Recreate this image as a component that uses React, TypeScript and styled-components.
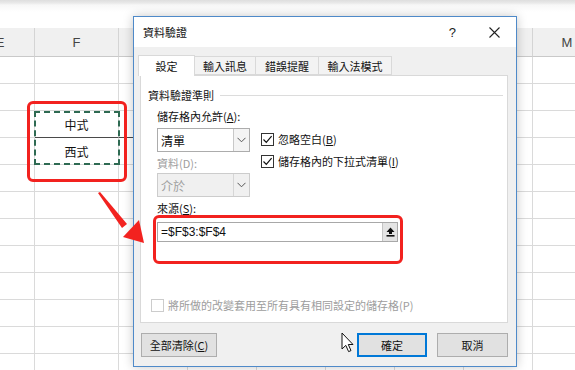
import React from "react";
import styled, { createGlobalStyle } from "styled-components";

const GlobalStyle = createGlobalStyle`
  html, body {
    margin: 0;
    padding: 0;
  }
  body {
    width: 575px;
    height: 370px;
    overflow: hidden;
    background: #fff;
    font-family: "Liberation Sans", "Noto Sans CJK TC", sans-serif;
  }
`;

// column letters; the ones under the dialog are left blank
const COLUMNS = ["E", "F", "", "", "", "", "", "", "M", "N"];
const COL_WIDTHS = "69px 84px repeat(8, 69px)";
const ROW_COUNT = 12;

const CELLS: Record<string, string> = {
  "2-1": "中式",
  "3-1": "西式",
};

const TABS = [
  { label: "設定", width: 57 },
  { label: "輸入訊息", width: 62 },
  { label: "錯誤提醒", width: 64 },
  { label: "輸入法模式", width: 74 },
];

const App: React.FC = () => {
  return (
    <Screen>
      <GlobalStyle />
      <TopStrip />
      <Grid>
        {COLUMNS.map((c, i) => (
          <HeadCell key={i}>{c}</HeadCell>
        ))}
        {Array.from({ length: ROW_COUNT }).map((_, r) =>
          COLUMNS.map((_c, ci) => (
            <Cell key={`${r}-${ci}`} strong={r === 2 && (ci === 1 || ci === 2)}>
              {CELLS[`${r}-${ci}`]}
            </Cell>
          ))
        )}
      </Grid>

      <CopyMarquee />
      <RedBox style={{ left: 27, top: 101, width: 100, height: 81 }} />

      <Dialog>
        <TitleBar>
          <Title>資料驗證</Title>
          <TitleControls>
            <Help>?</Help>
            <svg width="11" height="11" viewBox="0 0 11 11">
              <path d="M0.5 0.5 L10.5 10.5 M10.5 0.5 L0.5 10.5" stroke="#222" strokeWidth="1.1" />
            </svg>
          </TitleControls>
        </TitleBar>

        <DialogBody>
          <Tabs>
            {TABS.map((t, i) => (
              <Tab key={t.label} active={i === 0} width={t.width}>
                {t.label}
              </Tab>
            ))}
          </Tabs>

          <Panel>
            <GroupHeader>
              <span>資料驗證準則</span>
              <GroupLine />
            </GroupHeader>

            <GroupBody>
              <FieldRow>
                <FieldColumn>
                  <Label>
                    儲存格內允許(<u>A</u>):
                  </Label>
                  <Select>
                    <SelectText>清單</SelectText>
                    <SelectButton>
                      <Chevron />
                    </SelectButton>
                  </Select>
                  <Label disabled style={{ marginTop: 4 }}>
                    資料(D):
                  </Label>
                  <Select disabled>
                    <SelectText>介於</SelectText>
                    <SelectButton disabled>
                      <Chevron />
                    </SelectButton>
                  </Select>
                </FieldColumn>

                <CheckColumn>
                  <CheckRow>
                    <CheckBox checked />
                    <span>
                      忽略空白(<u>B</u>)
                    </span>
                  </CheckRow>
                  <CheckRow>
                    <CheckBox checked />
                    <span>
                      儲存格內的下拉式清單(<u>I</u>)
                    </span>
                  </CheckRow>
                </CheckColumn>
              </FieldRow>

              <Label style={{ marginTop: 4 }}>
                來源(<u>S</u>):
              </Label>
              <SourceInput>
                <SourceText>=$F$3:$F$4</SourceText>
                <CollapseButton>
                  <svg width="9" height="10" viewBox="0 0 9 10">
                    <path d="M4.5 0.5 L8.5 5 L6 5 L6 7 L3 7 L3 5 L0.5 5 Z" fill="#111" />
                    <rect x="0.5" y="8" width="8" height="1.6" fill="#111" />
                  </svg>
                </CollapseButton>
              </SourceInput>
            </GroupBody>

            <ApplyRow>
              <CheckBox disabled />
              <span>將所做的改變套用至所有具有相同設定的儲存格(P)</span>
            </ApplyRow>
          </Panel>

          <ButtonRow>
            <Button width={76}>
              全部清除(<u>C</u>)
            </Button>
            <Spacer />
            <Button width={70} primary>
              確定
            </Button>
            <Button width={71}>取消</Button>
          </ButtonRow>
        </DialogBody>
      </Dialog>

      <RedBox style={{ left: 153, top: 215, width: 250, height: 49 }} />

      <Arrow width="60" height="60" viewBox="0 0 60 60">
        <polygon points="7,7 9,6 36,38 31,42" fill="#f2221f" />
        <polygon points="53,57 32,51 48,34" fill="#f2221f" />
      </Arrow>

      <Cursor width="13" height="21" viewBox="0 0 13 21">
        <path
          d="M1 1 L1 17 L4.8 13.4 L7.6 19.6 L10 18.6 L7.3 12.5 L12 12.5 Z"
          fill="#fff"
          stroke="#111"
          strokeWidth="1"
          strokeLinejoin="round"
        />
      </Cursor>
    </Screen>
  );
};

const Chevron: React.FC = () => (
  <svg width="9" height="6" viewBox="0 0 9 6">
    <path d="M0.5 0.8 L4.5 4.8 L8.5 0.8" fill="none" stroke="#555" strokeWidth="1" />
  </svg>
);

const CheckBox: React.FC<{ checked?: boolean; disabled?: boolean }> = ({ checked, disabled }) => (
  <Box disabled={disabled}>
    {checked && (
      <svg width="11" height="11" viewBox="0 0 11 11">
        <path d="M1.5 5.5 L4.3 8.3 L9.6 2.2" fill="none" stroke="#111" strokeWidth="1.2" />
      </svg>
    )}
  </Box>
);

const Screen = styled.div`
  position: relative;
  width: 575px;
  height: 370px;
  overflow: hidden;
  background: #fff;
`;

const TopStrip = styled.div`
  height: 28px;
  background: linear-gradient(#dedede 0, #e9e9e9 3px, #f7f7f7 5px, #fff 12px);
`;

const Grid = styled.div`
  display: grid;
  grid-template-columns: ${COL_WIDTHS};
  grid-auto-rows: 27px;
  margin-left: -34px;
  width: 800px;
`;

const HeadCell = styled.div`
  height: 29px;
  margin-bottom: -2px;
  display: flex;
  align-items: center;
  justify-content: center;
  background: #f0f0f0;
  border-right: 1px solid #d4d4d4;
  border-bottom: 1px solid #c9c9c9;
  box-sizing: border-box;
  font-size: 13px;
  color: #444;
`;

const Cell = styled.div<{ strong?: boolean }>`
  box-sizing: border-box;
  border-right: 1px solid #dadada;
  border-bottom: 1px solid ${(p) => (p.strong ? "#4a4a4a" : "#dadada")};
  display: flex;
  align-items: center;
  justify-content: center;
  font-size: 12px;
  color: #111;
  position: relative;
  top: 2px;
`;

const CopyMarquee = styled.div`
  position: absolute;
  left: 34px;
  top: 111px;
  width: 86px;
  height: 54px;
  box-sizing: border-box;
  border: 2px dashed #2e6a52;
`;

const RedBox = styled.div`
  position: absolute;
  box-sizing: border-box;
  border: 3px solid #f2221f;
  border-radius: 6px;
  z-index: 5;
`;

const Arrow = styled.svg`
  position: absolute;
  left: 91px;
  top: 186px;
  z-index: 5;
`;

const Cursor = styled.svg`
  position: absolute;
  left: 341px;
  top: 332px;
  z-index: 6;
`;

const Dialog = styled.div`
  position: absolute;
  left: 133px;
  top: 16px;
  width: 384px;
  height: 351px;
  box-sizing: border-box;
  border: 1px solid #4f8ac9;
  background: #f0f0f0;
  display: flex;
  flex-direction: column;
  box-shadow: 0 0 10px rgba(0, 0, 0, 0.22);
  z-index: 2;
  font-family: "Noto Sans CJK TC", "Liberation Sans", sans-serif;
  font-size: 11px;
  color: #111;
`;

const TitleBar = styled.div`
  height: 30px;
  flex: none;
  background: #fff;
  display: flex;
  align-items: center;
  padding: 0 16px 0 9px;
`;

const Title = styled.div`
  flex: 1;
`;

const TitleControls = styled.div`
  display: flex;
  align-items: center;
  gap: 33px;
`;

const Help = styled.span`
  font-family: "Liberation Sans", sans-serif;
  font-size: 13px;
  color: #222;
`;

const DialogBody = styled.div`
  flex: 1;
  display: flex;
  flex-direction: column;
  padding: 8px 8px 9px 6px;
`;

const Tabs = styled.div`
  display: flex;
  align-items: flex-end;
  height: 20px;
  position: relative;
  z-index: 1;
`;

const Tab = styled.div<{ active?: boolean; width: number }>`
  box-sizing: border-box;
  width: ${(p) => p.width}px;
  height: ${(p) => (p.active ? "21px" : "19px")};
  margin-bottom: ${(p) => (p.active ? "-1px" : "0")};
  margin-left: ${(p) => (p.active ? "-2px" : "-1px")};
  display: flex;
  align-items: center;
  justify-content: center;
  background: ${(p) => (p.active ? "#fff" : "#f3f3f3")};
  border: 1px solid #d9d9d9;
  border-bottom: ${(p) => (p.active ? "none" : "1px solid #d9d9d9")};
  white-space: nowrap;
`;

const Panel = styled.div`
  height: 248px;
  flex: none;
  box-sizing: border-box;
  background: #fff;
  border: 1px solid #d9d9d9;
  display: flex;
  flex-direction: column;
  padding: 12px 4px 10px 0;
`;

const GroupHeader = styled.div`
  display: flex;
  align-items: center;
  padding-left: 7px;
  line-height: 14px;
`;

const GroupLine = styled.div`
  flex: 1;
  height: 1px;
  background: #dcdcdc;
  margin-left: 6px;
`;

const GroupBody = styled.div`
  display: flex;
  flex-direction: column;
  padding-left: 16px;
  margin-top: 7px;
`;

const FieldRow = styled.div`
  display: flex;
`;

const FieldColumn = styled.div`
  display: flex;
  flex-direction: column;
  width: 93px;
`;

const Label = styled.div<{ disabled?: boolean }>`
  line-height: 14px;
  height: 14px;
  white-space: nowrap;
  color: ${(p) => (p.disabled ? "#9d9d9d" : "#111")};
`;

const Select = styled.div<{ disabled?: boolean }>`
  margin-top: ${(p) => (p.disabled ? "3px" : "5px")};
  height: 24px;
  box-sizing: border-box;
  border: 1px solid ${(p) => (p.disabled ? "#cccccc" : "#acacac")};
  background: ${(p) => (p.disabled ? "#f0f0f0" : "#fff")};
  color: ${(p) => (p.disabled ? "#a0a0a0" : "#111")};
  display: flex;
`;

const SelectText = styled.div`
  flex: 1;
  display: flex;
  align-items: center;
  padding-left: 3px;
  font-size: 12px;
`;

const SelectButton = styled.div<{ disabled?: boolean }>`
  width: 15px;
  border-left: 1px solid ${(p) => (p.disabled ? "#d6d6d6" : "#c8c8c8")};
  background: ${(p) => (p.disabled ? "#f0f0f0" : "#f4f4f4")};
  display: flex;
  align-items: center;
  justify-content: center;
`;

const CheckColumn = styled.div`
  display: flex;
  flex-direction: column;
  gap: 8px;
  margin-left: 11px;
  padding-top: 23px;
`;

const CheckRow = styled.div`
  display: flex;
  align-items: center;
  gap: 4px;
  height: 14px;
  white-space: nowrap;
`;

const Box = styled.div<{ disabled?: boolean }>`
  width: 13px;
  height: 13px;
  box-sizing: border-box;
  border: 1px solid ${(p) => (p.disabled ? "#cccccc" : "#333")};
  background: #fff;
  display: flex;
  align-items: center;
  justify-content: center;
  flex: none;
`;

const SourceInput = styled.div`
  margin-top: 7px;
  width: 241px;
  height: 20px;
  box-sizing: border-box;
  border: 1px solid #a8a8a8;
  background: #fff;
  display: flex;
`;

const SourceText = styled.div`
  flex: 1;
  display: flex;
  align-items: center;
  padding-left: 3px;
  font-family: "Liberation Sans", sans-serif;
  font-size: 12px;
`;

const CollapseButton = styled.div`
  width: 14px;
  background: #e4e4e4;
  border-left: 1px solid #c4c4c4;
  display: flex;
  align-items: center;
  justify-content: center;
`;

const ApplyRow = styled.div`
  margin-top: auto;
  padding-left: 10px;
  display: flex;
  align-items: center;
  gap: 4px;
  height: 14px;
  color: #9d9d9d;
  white-space: nowrap;
`;

const ButtonRow = styled.div`
  margin-top: 10px;
  display: flex;
  gap: 10px;
  padding-left: 1px;
`;

const Spacer = styled.div`
  flex: 1;
`;

const Button = styled.div<{ width: number; primary?: boolean }>`
  width: ${(p) => p.width}px;
  height: 24px;
  box-sizing: border-box;
  background: #e1e1e1;
  border: 1px solid ${(p) => (p.primary ? "#0078d7" : "#adadad")};
  box-shadow: ${(p) => (p.primary ? "inset 0 0 0 1px #0078d7" : "none")};
  display: flex;
  align-items: center;
  justify-content: center;
`;

export default App;
